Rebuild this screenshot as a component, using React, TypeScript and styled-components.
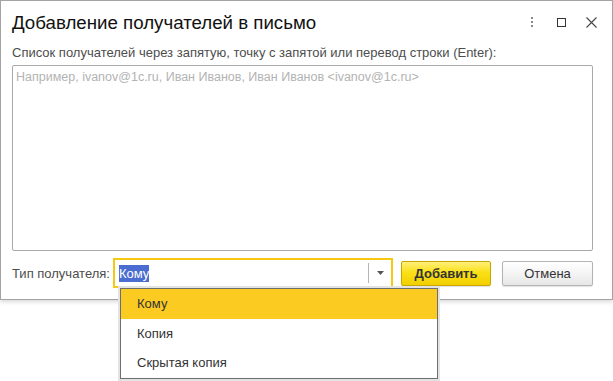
import React from 'react';
import styled, { createGlobalStyle } from 'styled-components';

const GlobalStyle = createGlobalStyle`
  body {
    margin: 0;
    background: #ffffff;
    font-family: "Liberation Sans", Arial, sans-serif;
  }
`;

const Page = styled.div`
  position: relative;
  width: 613px;
  height: 381px;
`;

const Window = styled.div`
  box-sizing: border-box;
  display: flex;
  flex-direction: column;
  width: 613px;
  height: 300px;
  border: 1px solid #a3a3a3;
  background: #ffffff;
  box-shadow: 0 2px 4px rgba(0, 0, 0, 0.15);
`;

const Header = styled.header`
  display: flex;
  align-items: center;
  justify-content: space-between;
  height: 43px;
  padding: 0 15px 0 11px;
`;

const Title = styled.h1`
  margin: 0;
  color: #111111;
  font-size: 18.7px;
  font-weight: normal;
`;

const Controls = styled.div`
  display: flex;
  align-items: center;
  gap: 20px;
  color: #4d4d4d;

  svg:first-child {
    margin-right: 3px;
  }
`;

const Body = styled.main`
  display: flex;
  flex: 1;
  flex-direction: column;
  padding: 1px 19px 10px 11px;
`;

const Caption = styled.label`
  color: #4d4d4d;
  font-size: 13px;
  line-height: 15px;
`;

const TextBox = styled.div`
  box-sizing: border-box;
  height: 186px;
  margin-top: 5px;
  padding: 4px 3px;
  border: 1px solid #a9a9a9;
  border-radius: 2px;
  color: #b3b3b3;
  font-size: 12.5px;
`;

const Row = styled.div`
  display: flex;
  align-items: center;
  margin-top: 7px;
`;

const RowLabel = styled.span`
  margin-right: 3px;
  color: #4d4d4d;
  font-size: 13px;
`;

const Combo = styled.div`
  box-sizing: border-box;
  display: flex;
  flex: 1;
  align-items: center;
  height: 30px;
  padding-left: 4px;
  border: 2px solid #f6c713;
`;

const Selected = styled.span`
  flex: 1;
  font-size: 13px;

  mark {
    padding: 1px 0;
    background: #4b6cd0;
    color: #ffffff;
  }
`;

const ComboButton = styled.div`
  display: flex;
  align-items: center;
  justify-content: center;
  width: 22px;
  height: 20px;
  border-left: 1px solid #b5b5b5;
`;

const Button = styled.button<{ $primary?: boolean }>`
  box-sizing: border-box;
  width: ${(p) => (p.$primary ? '90px' : '91px')};
  height: 25px;
  margin-left: ${(p) => (p.$primary ? '8px' : '11px')};
  padding: 0;
  border: 1px solid ${(p) => (p.$primary ? '#c7a600' : '#b4b4b4')};
  border-radius: 2px;
  background: ${(p) =>
    p.$primary
      ? 'linear-gradient(#fff07a, #fbe017 45%, #f2cf00)'
      : 'linear-gradient(#ffffff, #f4f4f4 50%, #e6e6e6)'};
  box-shadow: 0 1px 1px rgba(0, 0, 0, 0.12);
  color: #333333;
  font-family: inherit;
  font-size: 13px;
  font-weight: ${(p) => (p.$primary ? 'bold' : 'normal')};
`;

const Menu = styled.ul`
  position: absolute;
  top: 288px;
  left: 120px;
  box-sizing: border-box;
  width: 318px;
  margin: 0;
  padding: 0;
  border: 1px solid #6e6e6e;
  background: #ffffff;
  box-shadow: 0 0 0 2px #e3e3e3;
  list-style: none;
`;

const MenuItem = styled.li<{ $active?: boolean }>`
  height: 29.5px;
  padding-left: 16px;
  background: ${(p) => (p.$active ? '#fbcb22' : 'transparent')};
  color: #333333;
  font-size: 13px;
  line-height: 29.5px;
`;

const Dots = () => (
  <svg width="4" height="12" viewBox="0 0 4 12">
    <rect x="1" y="0" width="2" height="2" fill="#8a8a8a" />
    <rect x="1" y="4" width="2" height="2" fill="#8a8a8a" />
    <rect x="1" y="8" width="2" height="2" fill="#8a8a8a" />
  </svg>
);

const Maximize = () => (
  <svg width="9" height="9" viewBox="0 0 9 9">
    <rect x="0.5" y="0.5" width="8" height="8" fill="none" stroke="#333" />
  </svg>
);

const Close = () => (
  <svg width="11" height="11" viewBox="0 0 11 11">
    <path d="M0.5 0.5 L10.5 10.5 M10.5 0.5 L0.5 10.5" stroke="#444" strokeWidth="1.1" />
  </svg>
);

const Arrow = () => (
  <svg width="7" height="4" viewBox="0 0 7 4">
    <path d="M0 0 H7 L3.5 4 Z" fill="#555" />
  </svg>
);

export default function App() {
  const options = ['Кому', 'Копия', 'Скрытая копия'];

  return (
    <Page>
      <GlobalStyle />
      <Window>
        <Header>
          <Title>Добавление получателей в письмо</Title>
          <Controls>
            <Dots />
            <Maximize />
            <Close />
          </Controls>
        </Header>
        <Body>
          <Caption>
            Список получателей через запятую, точку с запятой или перевод строки (Enter):
          </Caption>
          <TextBox>Например, ivanov@1c.ru, Иван Иванов, Иван Иванов &lt;ivanov@1c.ru&gt;</TextBox>
          <Row>
            <RowLabel>Тип получателя:</RowLabel>
            <Combo>
              <Selected>
                <mark>Кому</mark>
              </Selected>
              <ComboButton>
                <Arrow />
              </ComboButton>
            </Combo>
            <Button $primary>Добавить</Button>
            <Button>Отмена</Button>
          </Row>
        </Body>
      </Window>
      <Menu>
        {options.map((o, i) => (
          <MenuItem key={o} $active={i === 0}>
            {o}
          </MenuItem>
        ))}
      </Menu>
    </Page>
  );
}
